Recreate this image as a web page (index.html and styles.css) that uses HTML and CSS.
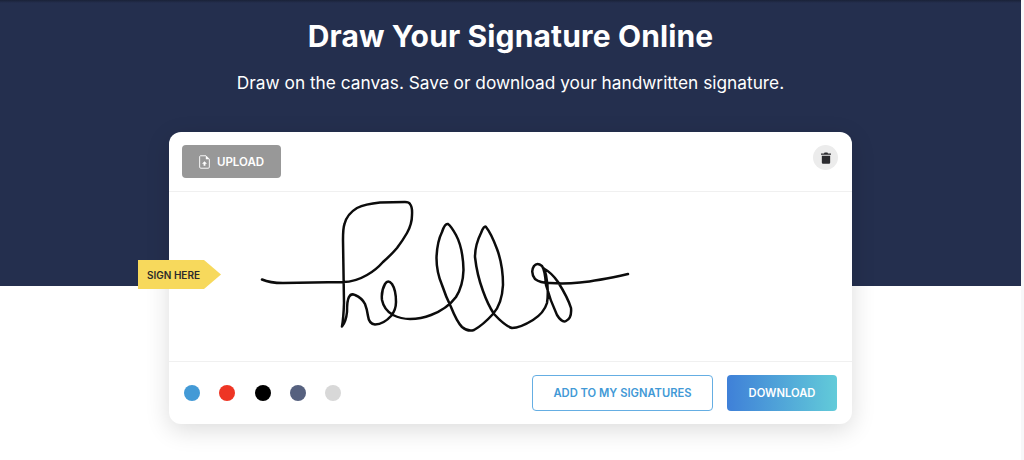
FILE: index.html
```html
<!DOCTYPE html>
<html lang="en">
<head>
	<meta charset="UTF-8">
	<title>Draw Your Signature Online</title>
	<link rel="stylesheet" href="styles.css">
</head>
<body>
	<div class="page">
		<div class="hero">
			<h1 class="hero-title">Draw Your Signature Online</h1>
			<p class="hero-sub">Draw on the canvas. Save or download your handwritten signature.</p>
		</div>

		<div class="card">
			<!-- top bar -->
			<div class="card-top">
				<a class="btn-upload" href="#">
					<svg class="upload-icon" viewBox="0 0 12 15" width="11" height="14">
						<path d="M1.5 .7H7.6L11.3 4.4V13a1.3 1.3 0 0 1-1.3 1.3H2A1.3 1.3 0 0 1 .7 13V2A1.3 1.3 0 0 1 1.5 .7Z" fill="none" stroke="#fff" stroke-width="1"/>
						<path d="M7.4 .7V4.6H11.3Z" fill="#fff"/>
						<path d="M6 6.6 8.7 9.4H7V11.6H5V9.4H3.3Z" fill="#fff"/>
					</svg>
					UPLOAD
				</a>
				<a class="btn-trash" href="#">
					<svg viewBox="0 0 12 14" width="10" height="12">
						<path d="M0 1.6H3.6L4.3.4H7.7L8.4 1.6H12V3.2H0ZM1 4.2H11V12.4A1.5 1.5 0 0 1 9.5 14H2.5A1.5 1.5 0 0 1 1 12.4Z" fill="#2a2a2e"/>
					</svg>
				</a>
			</div>

			<!-- drawing area -->
			<div class="card-canvas">
				<svg class="signature" viewBox="169 192 683 169" width="683" height="169">
					<path class="signature-line" d="M262 279.5Q270 283 283 283L343 282Q355 282 367 275Q376 270 383 262Q391 255 397 248Q403 240 407 233Q412 224 412 215Q412.5 207 410 204Q409 202 405 202L380 202.5Q365 204 357 208Q347 214 344.5 224Q343 228 343 240L344 303Q343.5 318 342 326.5Q346 322 347 312Q347 300 349 297Q351 293 355 295Q362 298 365 304Q367 309 368 316Q369 324 375 324.5Q384 324 391 316Q396 310 396 302Q396 290 392 284Q388 279 385 284Q381 291 382 300Q384 310 393 315Q401 319 410 319Q421 319 431 315Q447 309 456 297Q463 286 463.5 270Q463 248 456 235Q451 226 448 224Q445 223 442 232Q437 242 436.5 258Q436.5 272 442 285Q446 297 451 307Q457 322 462 327Q468 332 474 330Q483 325 493 314Q502 304 503 285Q503 265 497 249Q491 233 486 227Q484 225 481 233Q475 245 475 257Q477 275 483 291Q488 305 494 314Q505 326 512 328Q520 328 533 320Q544 313 547 303Q549 290 546 275Q544 267 543 268Q552 273 558 282Q568 298 571 308Q572 318 566 321Q562 323 557 315Q550 300 546 285Q545 270 542 266Q537 262 534 266Q530 272 535 279Q540 283 550 283Q565 284 580 282.5Q597 281 628 274"/>
				</svg>
				<div class="sign-here">SIGN HERE</div>
			</div>

			<!-- colours and actions -->
			<div class="card-bottom">
				<div class="colors">
					<span class="dot dot-blue"></span>
					<span class="dot dot-red"></span>
					<span class="dot dot-black"></span>
					<span class="dot dot-slate"></span>
					<span class="dot dot-grey"></span>
				</div>
				<div class="actions">
					<a class="btn btn-outline" href="#">ADD TO MY SIGNATURES</a>
					<a class="btn btn-fill" href="#">DOWNLOAD</a>
				</div>
			</div>
		</div>
	</div>
</body>
</html>
```

FILE: styles.css
```css
body {
	margin: 0;
	background: #f7f7f8;
	font-family: Inter, "Liberation Sans", sans-serif;
	overflow: hidden;
}
a {
	text-decoration: none;
}
.page {
	width: 1021px;
	height: 460px;
	background: #fff;
}

/* navy band */
.hero {
	height: 286px;
	padding-top: 18px;
	box-sizing: border-box;
	background: linear-gradient(#1a2238, #242f4e 3px);
	color: #fff;
	text-align: center;
}
.hero-title {
	margin: 0;
	font-size: 30px;
	line-height: 36px;
	font-weight: 700;
	letter-spacing: 0.14px;
}
.hero-sub {
	margin: 17px 0 0;
	font-size: 17.3px;
	line-height: 24px;
	font-weight: 400;
}

/* main card */
.card {
	position: relative;
	width: 683px;
	margin: -154px 0 0 169px;
	background: #fff;
	border-radius: 12px;
	box-shadow: 0 6px 24px rgba(0, 0, 0, 0.14);
}
.card-top {
	height: 59px;
	padding: 0 14px 0 13px;
	display: flex;
	align-items: center;
	justify-content: space-between;
	border-bottom: 1px solid #f0f0f0;
}
.btn-upload {
	width: 99px;
	height: 33px;
	display: flex;
	align-items: center;
	justify-content: center;
	gap: 7px;
	background: #989898;
	border-radius: 4px;
	color: #fff;
	font-size: 11.5px;
	font-weight: 600;
}
.btn-trash {
	width: 25px;
	height: 25px;
	margin-bottom: 8px;
	display: flex;
	align-items: center;
	justify-content: center;
	background: #ececec;
	border-radius: 50%;
}

/* signature */
.card-canvas {
	height: 169px;
	position: relative;
}
.signature {
	display: block;
}
.signature-line {
	fill: none;
	stroke: #0c0c0c;
	stroke-width: 2.5;
	stroke-linecap: round;
	stroke-linejoin: round;
}
.sign-here {
	position: absolute;
	left: -31px;
	top: 68px;
	width: 83px;
	height: 29px;
	padding-left: 9px;
	box-sizing: border-box;
	background: #f7d95c;
	clip-path: polygon(0 0, 66px 0, 100% 50%, 66px 100%, 0 100%);
	color: #2b2b2b;
	font-size: 10px;
	font-weight: 600;
	line-height: 30px;
}

/* bottom row */
.card-bottom {
	height: 62px;
	padding: 0 15px;
	display: flex;
	align-items: center;
	justify-content: space-between;
	border-top: 1px solid #f0f0f0;
}
.colors {
	display: flex;
	gap: 19.3px;
}
.dot {
	width: 16px;
	height: 16px;
	border-radius: 50%;
}
.dot-blue { background: #439ad6; }
.dot-red { background: #ee3524; }
.dot-black { background: #000; }
.dot-slate { background: #56617f; }
.dot-grey { background: #d8d8d8; }
.actions {
	display: flex;
	gap: 14px;
}
.btn {
	height: 36px;
	display: flex;
	align-items: center;
	justify-content: center;
	box-sizing: border-box;
	border-radius: 4px;
	font-size: 11.2px;
	font-weight: 600;
}
.btn-outline {
	width: 181px;
	border: 1px solid #65aee3;
	color: #4299d6;
}
.btn-fill {
	width: 110px;
	background: linear-gradient(90deg, #3f80d8, #62cbd9);
	color: #fff;
}
```
